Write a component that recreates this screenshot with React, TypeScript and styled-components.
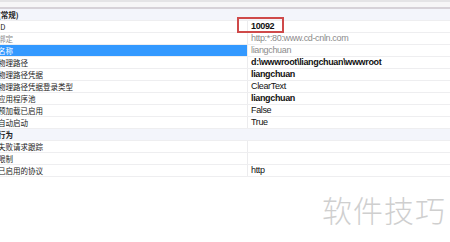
import React from "react";
import styled, { createGlobalStyle } from "styled-components";

const Global = createGlobalStyle`
  html, body { margin: 0; padding: 0; background: #ffffff; }
  body { width: 450px; height: 242px; overflow: hidden; }
`;

const Page = styled.div`
  position: relative;
  width: 450px;
  height: 242px;
  background: #fff;
  font-family: "Liberation Sans", "Noto Sans CJK SC", sans-serif;
`;

const TopBar = styled.div`
  height: 7px;
  background: linear-gradient(#e4e4e6 0, #e4e4e6 2px, #f6f6f7 2px);
  border-bottom: 2px solid #d6d2d8;
`;

const Grid = styled.div`
  display: flex;
  flex-direction: column;
`;

const Row = styled.div<{ $kind?: "cat" | "sel" | "plain" }>`
  display: grid;
  grid-template-columns: 247px 1fr;
  height: 11px;
  border-bottom: 1px solid #eeeef0;
  background: ${(p) => (p.$kind === "cat" ? "#f3f5fb" : "#fff")};
`;

const Label = styled.div<{ $sel?: boolean; $bold?: boolean; $dim?: boolean }>`
  overflow: hidden;
  white-space: nowrap;
  display: flex;
  align-items: center;
  font-family: "Noto Sans CJK SC", "Liberation Sans", sans-serif;
  font-size: 7.5px;
  line-height: 11px;
  font-weight: ${(p) => (p.$bold ? 700 : 400)};
  color: ${(p) => (p.$sel ? "#ffffff" : p.$dim ? "#8a8a8a" : "#222")};
  background: ${(p) => (p.$sel ? "#3399ff" : "transparent")};
  span { margin-left: -2px; }
`;

const Value = styled.div<{ $bold?: boolean; $dim?: boolean; $cat?: boolean }>`
  position: relative;
  white-space: nowrap;
  display: flex;
  align-items: center;
  padding-left: 3px;
  border-left: ${(p) => (p.$cat ? "none" : "1px solid #ececee")};
  font-family: "Liberation Sans", sans-serif;
  font-size: 9px;
  letter-spacing: -0.35px;
  line-height: 11px;
  font-weight: ${(p) => (p.$bold ? 700 : 400)};
  color: ${(p) => (p.$dim ? "#8c8c8c" : "#111")};
`;

const Highlight = styled.div`
  position: absolute;
  left: -11px;
  top: -4px;
  width: 43px;
  height: 12px;
  border: 2px solid #cf4a4a;
`;

const Watermark = styled.div`
  position: absolute;
  left: 322px;
  top: 192px;
  font-family: "Noto Sans CJK SC", sans-serif;
  font-size: 30px;
  line-height: 34px;
  font-weight: 300;
  color: #cfcfcf;
  letter-spacing: 1px;
`;

type R = {
  label: string;
  value?: string;
  kind?: "cat" | "sel" | "plain";
  bold?: boolean;
  dim?: boolean;
  box?: boolean;
};

const rows: R[] = [
  { label: "(常规)", kind: "cat" },
  { label: "ID", value: "10092", bold: true, box: true },
  { label: "绑定", value: "http:*:80:www.cd-cnln.com", dim: true },
  { label: "名称", value: "liangchuan", kind: "sel", dim: true },
  { label: "物理路径", value: "d:\\wwwroot\\liangchuan\\wwwroot", bold: true },
  { label: "物理路径凭据", value: "liangchuan", bold: true },
  { label: "物理路径凭据登录类型", value: "ClearText" },
  { label: "应用程序池", value: "liangchuan", bold: true },
  { label: "预加载已启用", value: "False" },
  { label: "自动启动", value: "True" },
  { label: "行为", kind: "cat" },
  { label: "失败请求跟踪", value: "" },
  { label: "限制", value: "" },
  { label: "已启用的协议", value: "http" },
];

export default function App() {
  return (
    <Page>
      <Global />
      <TopBar />
      <Grid>
        {rows.map((r, i) => (
          <Row key={i} $kind={r.kind}>
            <Label
              $sel={r.kind === "sel"}
              $bold={r.kind === "cat"}
              $dim={r.label === "绑定"}
            >
              <span>{r.label}</span>
            </Label>
            <Value $bold={r.bold} $dim={r.dim} $cat={r.kind === "cat"}>
              {r.box && <Highlight />}
              {r.value}
            </Value>
          </Row>
        ))}
      </Grid>
      <Watermark>软件技巧</Watermark>
    </Page>
  );
}
